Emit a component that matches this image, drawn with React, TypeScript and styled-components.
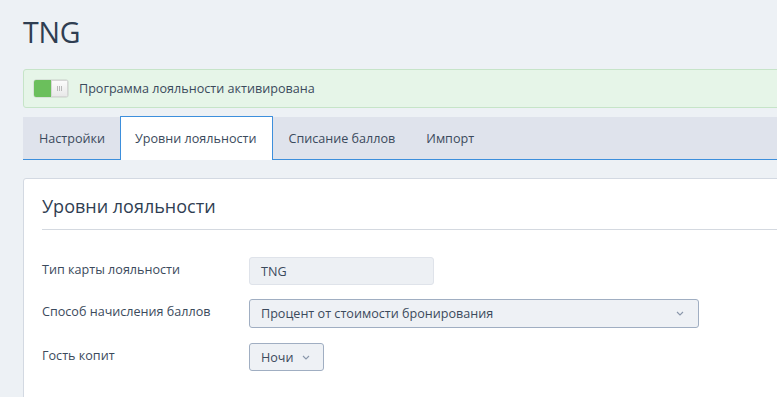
import styled, { createGlobalStyle } from "styled-components";

const GlobalStyle = createGlobalStyle`
  html, body {
    margin: 0;
    padding: 0;
    background: #edf1f5;
    overflow: hidden;
  }
  body {
    font-family: "Open Sans", "Noto Sans", sans-serif;
    color: #3b4a5a;
  }
`;

const tabs = ["Настройки", "Уровни лояльности", "Списание баллов", "Импорт"];

const App = (): JSX.Element => {
  return (
    <>
      <GlobalStyle />
      <Page>
        <Title>TNG</Title>
        <Alert>
          <Switch>
            <SwitchOn />
            <SwitchKnob>
              <Grip />
              <Grip />
              <Grip />
            </SwitchKnob>
          </Switch>
          <AlertText>Программа лояльности активирована</AlertText>
        </Alert>

        <Tabs>
          {tabs.map((t, i) => (
            <Tab key={t} $active={i === 1}>
              {t}
            </Tab>
          ))}
        </Tabs>

        <Card>
          <CardTitle>Уровни лояльности</CardTitle>
          <Hr />
          <Form>
            <Row>
              <Label>Тип карты лояльности</Label>
              <ReadOnly>TNG</ReadOnly>
            </Row>
            <Row $gap={14}>
              <Label>Способ начисления баллов</Label>
              <Select $width={450}>
                <span>Процент от стоимости бронирования</span>
                <Chevron />
              </Select>
            </Row>
            <Row $gap={16}>
              <Label>Гость копит</Label>
              <Select $compact>
                <span>Ночи</span>
                <Chevron />
              </Select>
            </Row>
          </Form>
        </Card>
      </Page>
    </>
  );
};

const Chevron = () => (
  <svg width="8" height="5" viewBox="0 0 8 5" fill="none">
    <path d="M1 1l3 3 3-3" stroke="#8a97aa" strokeWidth="1.1" />
  </svg>
);

const Page = styled.div`
  width: 1000px;
  padding: 13px 0 0 23px;
  display: flex;
  flex-direction: column;
`;

const Title = styled.h1`
  margin: 0;
  font-size: 28.5px;
  font-weight: 400;
  line-height: 38px;
  color: #2f3e52;
  letter-spacing: -0.2px;
`;

const Alert = styled.div`
  margin-top: 18px;
  height: 37px;
  display: flex;
  align-items: center;
  gap: 11px;
  padding: 0 10px;
  background: #e6f5e8;
  border: 1px solid #c6e4c8;
  border-radius: 3px;
`;

const Switch = styled.div`
  width: 34px;
  height: 17px;
  display: flex;
  border-radius: 2px;
  overflow: hidden;
  box-shadow: 0 0 0 0.5px #c8cfc8;
`;

const SwitchOn = styled.div`
  flex: 1;
  background: #6bbf5c;
`;

const SwitchKnob = styled.div`
  width: 17px;
  display: flex;
  align-items: center;
  justify-content: center;
  gap: 1px;
  background: linear-gradient(#fbfbfb, #e9e9e9);
  border: 1px solid #d6d6d6;
  box-sizing: border-box;
`;

const Grip = styled.span`
  width: 1px;
  height: 5px;
  background: #b9b9b9;
`;

const AlertText = styled.span`
  font-size: 12.6px;
  color: #3b4a5c;
`;

const Tabs = styled.div`
  margin-top: 9px;
  height: 42px;
  display: flex;
  align-items: stretch;
  background: #dfe3ec;
  border-bottom: 1px solid #3d8fdc;
`;

const Tab = styled.div<{ $active?: boolean }>`
  display: flex;
  align-items: center;
  padding: 0 15px 0 ${(p) => (p.$active ? "14px" : "16px")};
  font-size: 12.6px;
  color: #3b4a5c;
  ${(p) =>
    p.$active &&
    `
    background: #ffffff;
    border: 1px solid #3d8fdc;
    border-bottom: none;
    margin: -1px 0 -1px;
    padding-bottom: 1px;
    border-radius: 1px 1px 0 0;
  `}
`;

const Card = styled.div`
  margin-top: 18px;
  background: #ffffff;
  border: 1px solid #d3d9e2;
  border-radius: 3px;
  padding: 0 0 40px 18px;
`;

const CardTitle = styled.h2`
  margin: 0;
  padding: 14px 0 0;
  font-size: 18px;
  font-weight: 400;
  line-height: 26px;
  color: #2f3e52;
`;

const Hr = styled.div`
  margin-top: 10px;
  height: 1px;
  background: #d4d9e0;
`;

const Form = styled.div`
  margin-top: 27px;
  display: flex;
  flex-direction: column;
`;

const Row = styled.div<{ $gap?: number }>`
  display: flex;
  align-items: center;
  height: 28px;
  margin-top: ${(p) => p.$gap ?? 0}px;
`;

const Label = styled.div`
  width: 207px;
  font-size: 12.6px;
  color: #3b4a5c;
  margin-top: -4px;
`;

const ReadOnly = styled.div`
  width: 185px;
  height: 28px;
  box-sizing: border-box;
  display: flex;
  align-items: center;
  padding: 0 11px;
  font-size: 12.6px;
  color: #3b4a5c;
  background: #edf0f4;
  border: 1px solid #dfe3ea;
  border-radius: 3px;
`;

const Select = styled.div<{ $width?: number; $compact?: boolean }>`
  width: ${(p) => (p.$width ? `${p.$width}px` : "auto")};
  height: ${(p) => (p.$compact ? 28 : 29)}px;
  box-sizing: border-box;
  display: flex;
  align-items: center;
  justify-content: ${(p) => (p.$compact ? "flex-start" : "space-between")};
  gap: 8px;
  padding: 0 ${(p) => (p.$compact ? "13px" : "14px")} 0 11px;
  font-size: 12.6px;
  color: #3b4a5c;
  background: #eef1f5;
  border: 1px solid #a0aec2;
  border-radius: 3px;
`;

export default App;
